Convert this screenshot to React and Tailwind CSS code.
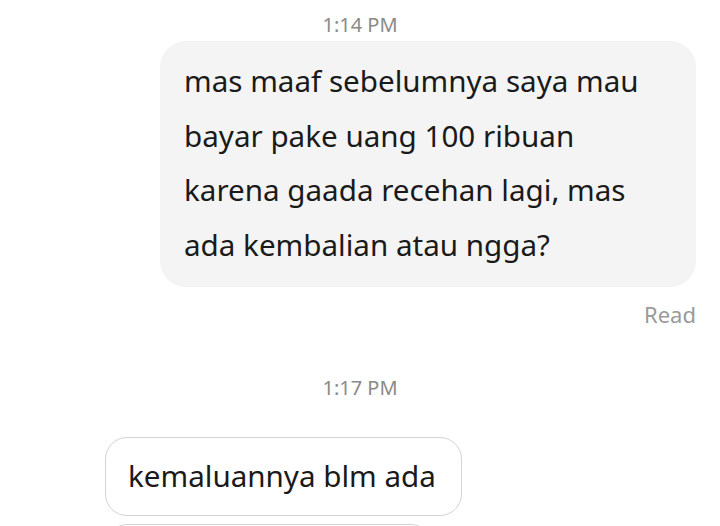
export default function App() {
  const font = { fontFamily: '"Noto Sans", "Open Sans", sans-serif' };

  return (
    <div className="w-[720px] h-[526px] overflow-hidden bg-white flex flex-col" style={font}>
      <div className="pt-[11px] text-center text-[20px] leading-[28px] text-[#8a8a8a]">1:14 PM</div>

      <div className="flex justify-end pr-[24px] mt-[2px]">
        <div className="w-[536px] h-[246px] bg-[#f4f4f4] rounded-[26px] pl-[24px] pt-[13px] text-[29.6px] leading-[54.5px] text-[#1a1a1a]">
          mas maaf sebelumnya saya mau<br />
          bayar pake uang 100 ribuan<br />
          karena gaada recehan lagi, mas<br />
          ada kembalian atau ngga?
        </div>
      </div>

      <div className="flex justify-end pr-[24px] mt-[12px] text-[22px] leading-[30px] text-[#9a9a9a]">Read</div>

      <div className="mt-[45px] text-center text-[20px] leading-[28px] text-[#8a8a8a]">1:17 PM</div>

      <div className="flex pl-[105px] mt-[35px]">
        <div className="h-[79px] w-[357px] border-[1.5px] border-[#d4d4d4] rounded-[22px] pl-[22px] flex items-center text-[29.6px] text-[#1a1a1a]">
          kemaluannya blm ada
        </div>
      </div>

      <div className="flex pl-[107px] mt-[8px]">
        <div className="w-[324px] h-[40px] border-[1.5px] border-[#d4d4d4] rounded-[22px]"></div>
      </div>
    </div>
  );
}
